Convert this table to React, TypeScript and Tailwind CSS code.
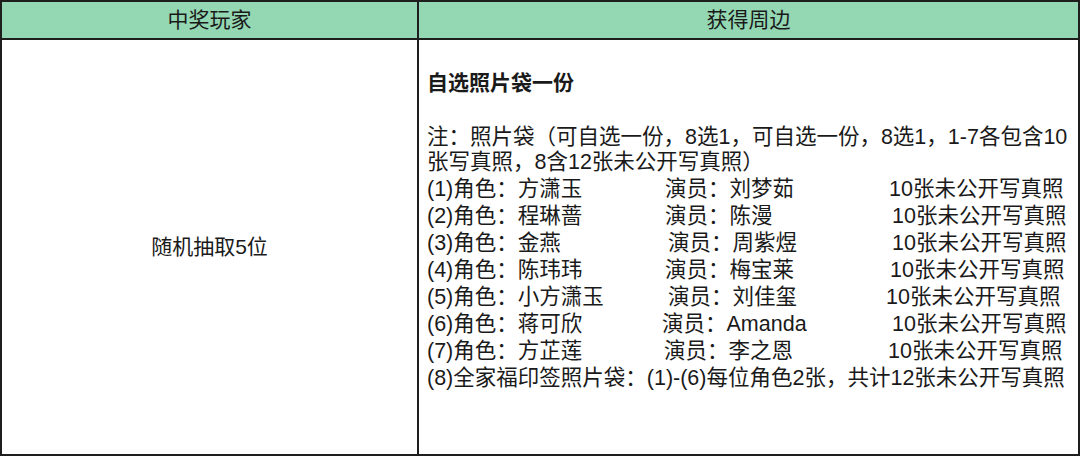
const rows = [
  { no: "(1)", role: "方潇玉", actor: "刘梦茹", a: 665, c: 889 },
  { no: "(2)", role: "程琳蔷", actor: "陈漫", a: 665, c: 892 },
  { no: "(3)", role: "金燕", actor: "周紫煜", a: 668, c: 892 },
  { no: "(4)", role: "陈玮玮", actor: "梅宝莱", a: 665, c: 890 },
  { no: "(5)", role: "小方潇玉", actor: "刘佳玺", a: 668, c: 886 },
  { no: "(6)", role: "蒋可欣", actor: "Amanda", a: 662, c: 892 },
  { no: "(7)", role: "方芷莲", actor: "李之恩", a: 664, c: 888 },
];

// text in the right cell starts at x=427
const START = 427;

export default function App() {
  return (
    <div
      className="w-[1080px] h-[456px] bg-white border-2 border-[#1e1e1e] flex flex-col text-[21px] text-[#1a1a1a]"
      style={{ fontFamily: '"Liberation Sans", "Noto Sans CJK SC", sans-serif' }}
    >
      {/* header row */}
      <div className="flex h-[38px] shrink-0 bg-[#94d8b3] border-b-2 border-[#1e1e1e]">
        <div className="w-[417px] border-r-2 border-[#1e1e1e] flex items-center justify-center">
          中奖玩家
        </div>
        <div className="flex-1 flex items-center justify-center">获得周边</div>
      </div>

      {/* body row */}
      <div className="flex flex-1 min-h-0">
        <div className="w-[417px] border-r-2 border-[#1e1e1e] flex items-center justify-center">
          随机抽取5位
        </div>
        <div className="flex-1 pl-[8px] pt-[29px] leading-[27px] whitespace-nowrap text-[21.5px]">
          <p className="font-bold mb-[28px] text-[21px]">自选照片袋一份</p>
          <p>注：照片袋（可自选一份，8选1，可自选一份，8选1，1-7各包含10</p>
          <p className="-mt-[2px]">张写真照，8含12张未公开写真照）</p>
          {rows.map((r) => (
            <div key={r.no} className="flex">
              <span className="shrink-0" style={{ width: r.a - START }}>
                {r.no}角色：{r.role}
              </span>
              <span className="shrink-0" style={{ width: r.c - r.a }}>
                演员：{r.actor}
              </span>
              <span>10张未公开写真照</span>
            </div>
          ))}
          <p>(8)全家福印签照片袋：(1)-(6)每位角色2张，共计12张未公开写真照</p>
        </div>
      </div>
    </div>
  );
}
